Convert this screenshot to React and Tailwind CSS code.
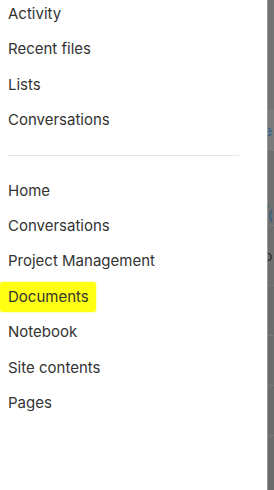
const top = ['Activity', 'Recent files', 'Lists', 'Conversations']
const site = ['Home', 'Conversations', 'Project Management', 'Documents', 'Notebook', 'Site contents', 'Pages']

function NavItem({ label }) {
  const marked = label === 'Documents'
  return (
    <div className="h-[35.4px] flex items-center pl-2 shrink-0">
      {marked ? (
        <span className="-ml-2 pl-2 pr-[7px] py-[4px] bg-[#ffff14] rounded-[3px] shadow-[0_0_2px_#ffff3c]">{label}</span>
      ) : (
        <span>{label}</span>
      )}
    </div>
  )
}

export default function App() {
  return (
    <div className="h-[490px] w-[274px] flex overflow-hidden bg-white font-['Inter',sans-serif] text-[15px] text-[#333]">
      <div className="w-[267px] bg-white flex flex-col -mt-[3.7px] overflow-hidden">
        {top.map((t) => (
          <NavItem key={t} label={t} />
        ))}
        <div className="h-[35.4px] flex items-center pl-2 pr-7 shrink-0">
          <div className="h-px w-full bg-[#e6e6e6]" />
        </div>
        {site.map((t) => (
          <NavItem key={t} label={t} />
        ))}
      </div>
      {/* dimmed page behind the panel */}
      <div className="w-[7px] flex flex-col border-l border-[#9a9a9a] overflow-hidden">
        <div className="h-[110px] bg-[#737373]" />
        <div className="h-[40px] bg-[#7a7a7a] flex items-center text-[#2a5d8f] text-[14px] -indent-[4px]">e</div>
        <div className="h-[45px] bg-[#6f6f6f] border-t border-[#7c7c7c]" />
        <div className="h-[30px] bg-[#6f6f6f] text-[#2d5a86] text-[14px] leading-[14px] -indent-[4px]">\<br />(S</div>
        <div className="h-[60px] bg-[#6e6e6e] border-t border-[#7a7a7a] flex items-center text-[#222] text-[14px] -indent-[4px]">o</div>
        <div className="h-[50px] bg-[#6c6c6c] border-t border-[#777]" />
        <div className="h-[50px] bg-[#6c6c6c] border-t border-[#777]" />
        <div className="h-[50px] bg-[#6b6b6b] border-t border-[#777]" />
        <div className="flex-1 bg-[#6b6b6b] border-t border-[#777]" />
      </div>
    </div>
  )
}
